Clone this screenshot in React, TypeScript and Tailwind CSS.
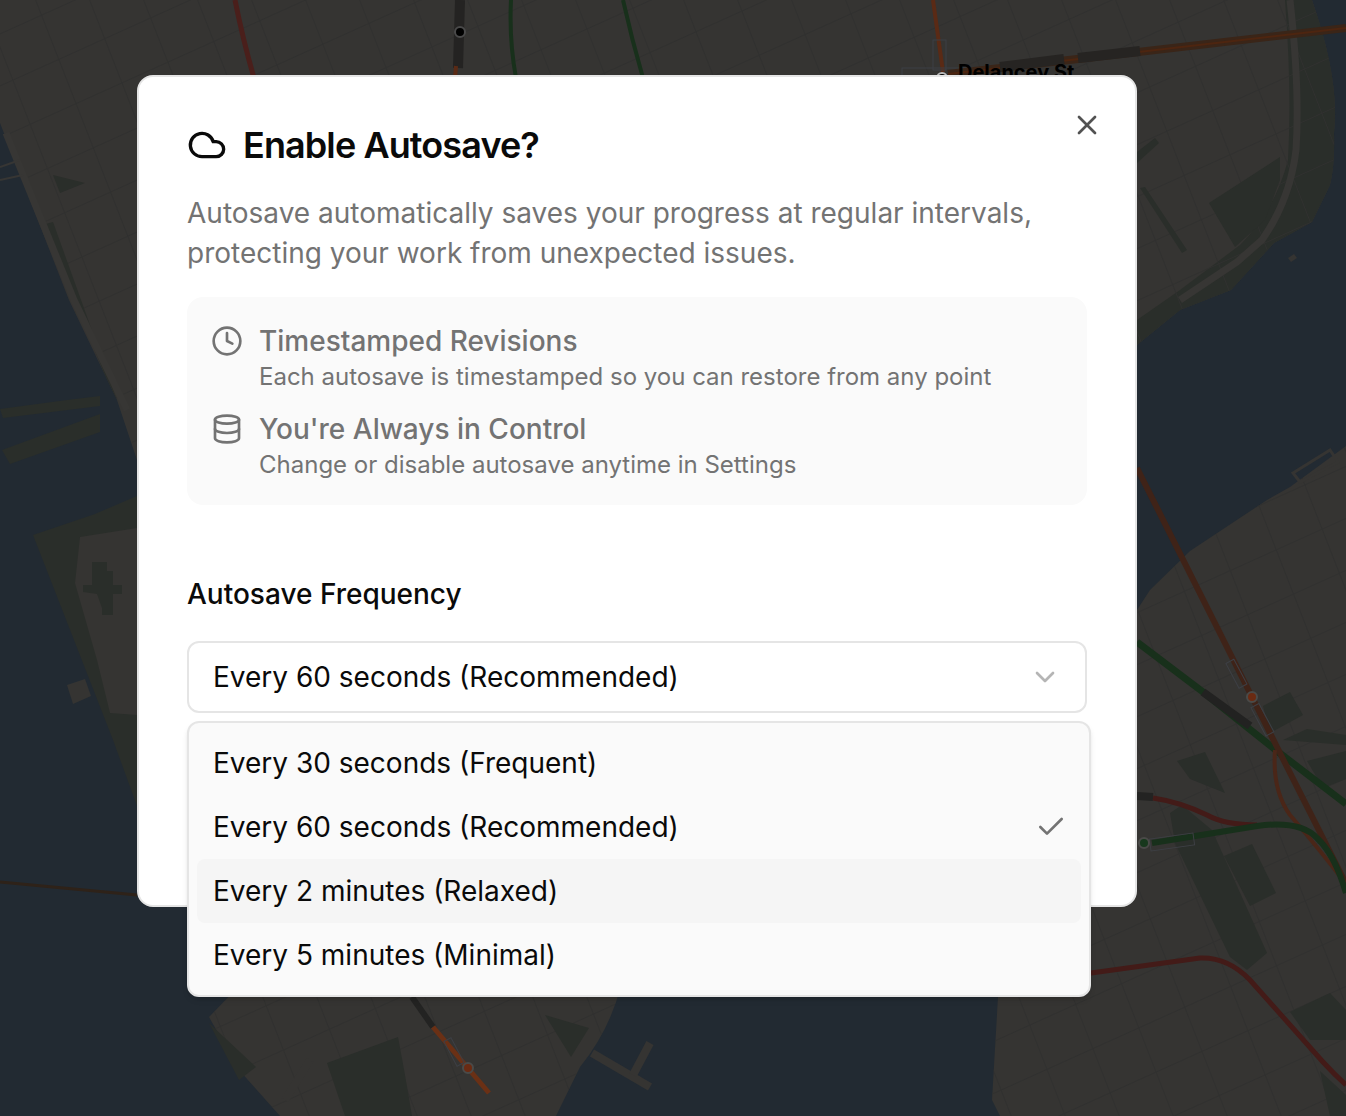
import { Check, ChevronDown, Clock, Cloud, Database, X } from "lucide-react";

const LAND = "#353432";
const ROAD = "#373634";
const PARK = "#2a2e2a";
const WATER = "#222a32";
const STREET = "#313130";
const RED = "#431b18";
const ORANGE = "#3f2318";
const GREEN = "#18301b";
const OUTLINE = "#3d3f44";

const landShapes = [
  "M0 0L1312 0Q1340 80 1334 133Q1335 165 1330 185L1312 222L1274 243L1231 290L1180 310L1137 345L1137 470L137 500L137 460L117 400L69 300L0 123Z",
  "M1137 610L1150 590L1190 551L1267 500L1290 487L1346 446L1346 1116L1000 1116L992 1100L998 997L1000 800L1137 800Z",
  "M209 1017L240 985L621 985Q610 1030 580 1067L556 1116L280 1116L239 1070Z",
];

const parkLow = [
  "M33 535L95 514L137 496L137 806L113 740Z",
  "M1285 0L1312 0Q1340 80 1334 133Q1335 165 1330 185L1312 222L1274 243L1231 290L1180 310L1137 345L1137 320L1180 290L1240 245Q1275 210 1288 160Q1292 90 1285 0Z",
  "M0 409L67 400L100 396L100 406L3 418Z",
  "M2 450L100 414L100 432L10 464Z",
];

const innerLand = [
  "M80 537L137 528L137 715L110 713L97 660L75 583Z",
  "M67 685L85 679L91 696L73 704Z",
];

const parks = [
  "M1209 203L1280 157L1280 180L1265 220L1235 247Z",
  "M1140 188L1145 187L1187 250L1182 253Z",
  "M1137 152L1155 138L1159 143L1137 163Z",
  "M1224 856L1252 844L1276 893L1250 906Z",
  "M1175 843L1170 813L1182 805L1212 830L1267 953L1247 970L1230 957Z",
  "M1263 706L1290 692L1303 715L1270 733Z",
  "M1283 740L1307 729L1346 735L1346 745Z",
  "M1307 761L1346 751L1346 779L1323 788Z",
  "M1177 761L1205 752L1225 793L1190 779Z",
  "M1290 1012L1330 993L1346 1010L1346 1040L1310 1040Z",
  "M1320 1071L1346 1095L1346 1116L1330 1116Z",
  "M53 175L85 183L60 193Z",
  "M42 225L53 222L117 400L105 375Z",
  "M327 1063L398 1037L405 1075L412 1116L345 1116Z",
  "M545 1015L589 1028L571 1057Z",
  "M209 1023L256 1067L239 1080Z",
  "M92 562L107 562L107 571L113 571L113 585L122 585L122 594L113 594L113 615L102 615L102 608L97 594L83 592L83 585L92 585Z",
];

const gridA = Array.from({ length: 40 }, (_, i) => i);
const gridB = Array.from({ length: 46 }, (_, i) => i);

function MapBackground() {
  return (
    <svg className="absolute inset-0" width="1346" height="1116" viewBox="0 0 1346 1116" fill="none">
      <defs>
        <clipPath id="land-clip">
          {landShapes.map((d) => (
            <path key={d} d={d} />
          ))}
        </clipPath>
      </defs>
      <rect width="1346" height="1116" fill={WATER} />
      {landShapes.map((d) => (
        <path key={d} d={d} fill={LAND} />
      ))}
      {parkLow.map((d) => (
        <path key={d} d={d} fill={PARK} />
      ))}
      {innerLand.map((d) => (
        <path key={d} d={d} fill={LAND} />
      ))}
      <g clipPath="url(#land-clip)" stroke={STREET} strokeWidth="1">
        {gridA.map((i) => (
          <line key={i} x1={-520 + i * 54} y1={-40} x2={-520 + i * 54 + 484} y2={1200} />
        ))}
        {gridB.map((i) => (
          <line key={i} x1={-40} y1={i * 52} x2={1400} y2={i * 52 - 650} />
        ))}
      </g>
      {parks.map((d) => (
        <path key={d} d={d} fill={PARK} />
      ))}
      <g stroke={ROAD} strokeWidth="7">
        <path d="M6 133L74 300L127 410" />
        <path d="M1290 0Q1300 90 1296 150Q1290 200 1262 240L1237 262L1180 300" />
      </g>
      <g stroke={ROAD} strokeWidth="2">
        <path d="M0 167L20 160M0 180L23 175" />
      </g>
      <g stroke={LAND} strokeWidth="8">
        <path d="M592 1053L650 1087" />
        <path d="M650 1043L633 1075" />
        <path d="M285 1100L310 1060" />
      </g>
      <path d="M1293 473L1330 450L1338 462L1300 482Z" stroke={LAND} strokeWidth="3" />
      <path d="M1288 258L1294 254L1297 258L1291 262Z" fill={LAND} />

      <path d="M235 0Q243 40 254 78" stroke="#4a1f1b" strokeWidth="5" />
      <path d="M460 0L458 68" stroke="#242322" strokeWidth="10" />
      <path d="M456 66L455 78" stroke="#5a2a15" strokeWidth="4" />
      <circle cx="460" cy="32" r="5" fill="#000" stroke="#4a4a4a" strokeWidth="2" />
      <path d="M511 0Q509 40 516 78" stroke={GREEN} strokeWidth="4" />
      <path d="M623 0Q632 40 643 78" stroke={GREEN} strokeWidth="4" />
      <path d="M933 0L943 72" stroke="#5a2a15" strokeWidth="4" />
      <rect x="902" y="68" width="80" height="20" stroke={OUTLINE} strokeWidth="1" />
      <rect x="933" y="40" width="13" height="30" stroke={OUTLINE} strokeWidth="1" />
      <circle cx="942" cy="78" r="5" fill="#000" stroke="#bbb" strokeWidth="2" />
      <path d="M948 74L1346 28" stroke="#3a2518" strokeWidth="8" />
      <path d="M948 74L1346 28" stroke="#4d2510" strokeWidth="2" />
      <path d="M1000 67L1064 59M1078 58L1140 51" stroke="#262422" strokeWidth="10" />
      <text x="958" y="79" fill="#000" fontFamily="Inter, sans-serif" fontSize="20" fontWeight="700">
        Delancey St
      </text>

      <path d="M1137 642L1203 692L1277 751L1346 804" stroke={GREEN} strokeWidth="7" />
      <path d="M1203 692L1250 726" stroke="#222221" strokeWidth="8" />
      <path d="M1137 468L1252 697L1277 747L1346 884" stroke={ORANGE} strokeWidth="6" />
      <path d="M1275 750Q1272 790 1290 815Q1320 850 1346 884" stroke="#4a2618" strokeWidth="4" />
      <rect x="1232" y="660" width="9" height="28" transform="rotate(-28 1236 674)" stroke={OUTLINE} />
      <rect x="1258" y="704" width="9" height="32" transform="rotate(-28 1262 720)" stroke={OUTLINE} />
      <circle cx="1252" cy="697" r="5" fill="#6a2a12" stroke="#4a4a48" strokeWidth="2" />
      <path d="M1137 796L1153 797" stroke="#232322" strokeWidth="8" />
      <path d="M1153 798Q1180 802 1207 815Q1225 825 1257 825" stroke={RED} strokeWidth="5" />
      <path d="M1152 843L1257 826Q1300 820 1317 838Q1335 855 1346 893" stroke={GREEN} strokeWidth="6" />
      <rect x="1150" y="836" width="44" height="12" transform="rotate(-8 1172 842)" stroke={OUTLINE} />
      <circle cx="1144" cy="843" r="5" fill="#17381d" stroke="#4a4a48" strokeWidth="2" />
      <path d="M1091 973L1200 958Q1228 957 1250 980L1323 1062Q1335 1075 1346 1085" stroke={RED} strokeWidth="5" />
      <path d="M0 882L137 895" stroke="#2e2219" strokeWidth="3" />
      <path d="M412 997L433 1027" stroke="#232322" strokeWidth="6" />
      <path d="M433 1027L489 1093" stroke="#6a3015" strokeWidth="5" />
      <rect x="450" y="1038" width="8" height="28" transform="rotate(-28 454 1052)" stroke={OUTLINE} />
      <circle cx="468" cy="1068" r="5" fill="#6a2a12" stroke="#4a4a48" strokeWidth="2" />
    </svg>
  );
}

const features = [
  {
    Icon: Clock,
    title: "Timestamped Revisions",
    text: "Each autosave is timestamped so you can restore from any point",
  },
  {
    Icon: Database,
    title: "You're Always in Control",
    text: "Change or disable autosave anytime in Settings",
  },
];

const options = [
  { label: "Every 30 seconds (Frequent)" },
  { label: "Every 60 seconds (Recommended)", selected: true },
  { label: "Every 2 minutes (Relaxed)", active: true },
  { label: "Every 5 minutes (Minimal)" },
];

export default function App() {
  return (
    <div className="relative h-[1116px] w-full overflow-hidden bg-[#222a32] font-[Inter,sans-serif]">
      <MapBackground />
      <div className="relative pl-[137px] pt-[75px]">
        <div className="relative h-[832px] w-[1000px] rounded-[16px] border-2 border-[#e5e5e5] bg-white p-12">
          <button className="absolute right-8 top-8 text-[#525252]">
            <X className="size-8" strokeWidth={2} />
          </button>
          <div className="flex h-10 items-center gap-4">
            <Cloud className="size-10 text-[#0a0a0a]" strokeWidth={2} />
            <h2 className="text-[36px] font-semibold leading-10 tracking-[-0.9px] text-[#0a0a0a]">Enable Autosave?</h2>
          </div>
          <p className="mt-7 text-[28px] leading-10 text-[#737373]">
            Autosave automatically saves your progress at regular intervals,
            <br />
            protecting your work from unexpected issues.
          </p>
          <div className="mt-6 flex flex-col gap-4 rounded-[16px] bg-[#fafafa] p-6">
            {features.map(({ Icon, title, text }) => (
              <div key={title} className="flex items-start gap-4">
                <div className="flex h-10 items-center">
                  <Icon className="size-8 text-[#737373]" strokeWidth={2} />
                </div>
                <div>
                  <div className="text-[28px] font-medium leading-10 text-[#737373]">{title}</div>
                  <div className="text-[24px] leading-8 text-[#737373]">{text}</div>
                </div>
              </div>
            ))}
          </div>
          <label className="mt-[69px] block text-[28px] font-medium leading-10 text-[#0a0a0a]">Autosave Frequency</label>
          <div className="relative mt-[27px]">
            <div className="flex h-[72px] items-center justify-between rounded-[12px] border-2 border-[#e5e5e5] bg-white px-6 text-[28px] text-[#0a0a0a]">
              <span>Every 60 seconds (Recommended)</span>
              <ChevronDown className="size-8 text-[#b5b5b5]" strokeWidth={2} />
            </div>
            <div className="absolute left-0 top-20 w-[904px] rounded-[12px] border-2 border-[#e5e5e5] bg-[#fafafa] p-2 shadow-md">
              {options.map((o) => (
                <div
                  key={o.label}
                  className={
                    o.active
                      ? "flex h-16 items-center justify-between rounded-[8px] bg-[#f5f5f5] pl-4 pr-[14px] text-[28px] text-[#0a0a0a]"
                      : "flex h-16 items-center justify-between rounded-[8px] pl-4 pr-[14px] text-[28px] text-[#0a0a0a]"
                  }
                >
                  <span>{o.label}</span>
                  {o.selected && <Check className="size-8 text-[#737373]" strokeWidth={2} />}
                </div>
              ))}
            </div>
          </div>
        </div>
      </div>
    </div>
  );
}
